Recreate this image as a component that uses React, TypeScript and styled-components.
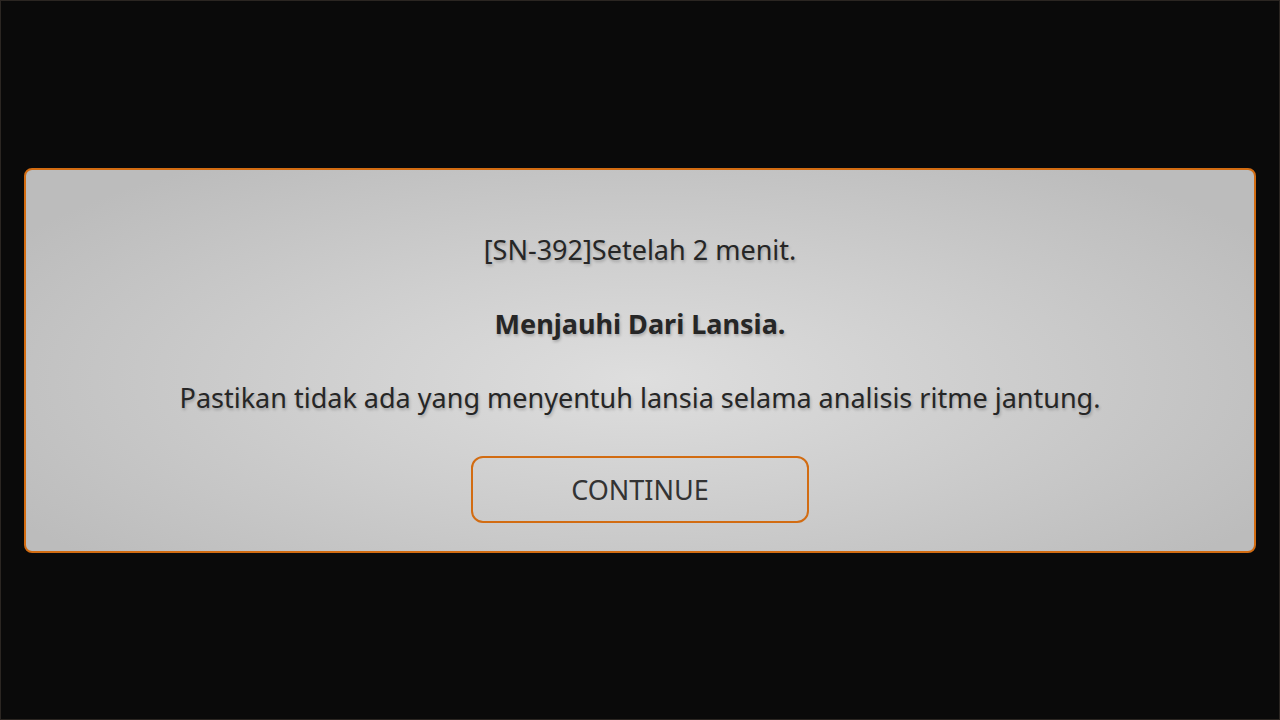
import React from "react";
import styled, { createGlobalStyle } from "styled-components";

const Global = createGlobalStyle`
  html, body { margin: 0; padding: 0; background: #0a0a0a; }
  #root { width: 1280px; height: 720px; }
`;

const Screen = styled.div`
  box-sizing: border-box;
  width: 1280px;
  height: 720px;
  background: #0a0a0a;
  border: 1px solid #2b2622;
  display: flex;
  align-items: center;
  padding: 0 23px;
  font-family: "Noto Sans", "Open Sans", sans-serif;
`;

const Dialog = styled.div`
  box-sizing: border-box;
  flex: 1;
  height: 385px;
  border: 2px solid #d26c12;
  border-radius: 8px;
  background: radial-gradient(ellipse 60% 70% at 50% 55%, #dedede 0%, #cfcfcf 45%, #bcbcbc 100%);
  display: flex;
  flex-direction: column;
  align-items: center;
  padding-top: 62px;
`;

const Line = styled.div<{ $bold?: boolean; $gap?: number }>`
  font-size: 27px;
  line-height: 36px;
  color: #262626;
  font-weight: ${(p) => (p.$bold ? 700 : 400)};
  margin-bottom: ${(p) => p.$gap ?? 38}px;
  text-shadow: 1px 2px 3px rgba(0, 0, 0, 0.22);
  text-align: center;
`;

const Button = styled.button`
  box-sizing: border-box;
  width: 338px;
  height: 67px;
  border: 2px solid #d26c12;
  border-radius: 12px;
  background: transparent;
  font-family: "Noto Sans", "Open Sans", sans-serif;
  font-size: 27px;
  color: #333333;
  padding: 0;
  display: flex;
  align-items: center;
  justify-content: center;
`;

export default function App() {
  return (
    <>
      <Global />
      <Screen>
        <Dialog>
          <Line>[SN-392]Setelah 2 menit.</Line>
          <Line $bold>Menjauhi Dari Lansia.</Line>
          <Line $gap={40}>Pastikan tidak ada yang menyentuh lansia selama analisis ritme jantung.</Line>
          <Button>CONTINUE</Button>
        </Dialog>
      </Screen>
    </>
  );
}
